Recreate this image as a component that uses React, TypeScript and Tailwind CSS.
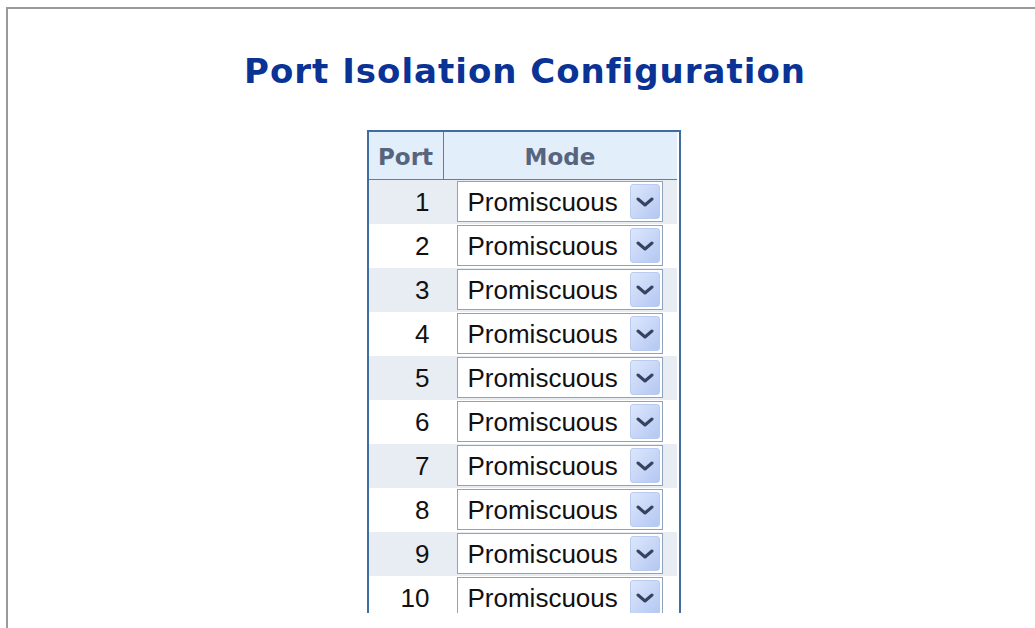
const ports = Array.from({ length: 10 }, (_, i) => i + 1);

const Chevron = () => (
    <svg width="18" height="10" viewBox="0 0 18 10" fill="none">
        <path d="M2 2 L9 8 L16 2" stroke="#36425e" strokeWidth="3" strokeLinecap="round" strokeLinejoin="round" />
    </svg>
);

const ModeSelect = () => (
    <div className="mt-px flex h-[41px] w-[206px] items-center border border-[#8ea3bf] bg-white pl-[10px] pr-[2px]">
        <span className="flex-1 text-[26px] leading-none text-[#111]">Promiscuous</span>
        <span className="flex h-[35px] w-[30px] items-center justify-center rounded-[3px] border border-[#b9cbef] bg-gradient-to-br from-[#dde7fc] to-[#b3c7f3]">
            <Chevron />
        </span>
    </div>
);

export default function App() {
    return (
        <div className="h-[628px] w-[1035px] overflow-hidden bg-white">
            <div className="ml-[6px] mt-[7px] h-[700px] w-[1038px] border-2 border-[#9a9a9a] bg-white">
                <h1
                    className="mt-[45px] text-center text-[34px] font-bold leading-none tracking-[1px] text-[#0a3396]"
                    style={{ fontFamily: '"DejaVu Sans", Verdana, sans-serif' }}>
                    Port Isolation Configuration
                </h1>

                <div className="mt-[42px] flex h-[483px] justify-center overflow-hidden pr-[3px]">
                    <div className="h-[520px] w-[314px] border-x-2 border-t-2 border-[#3f6d9f] pr-[2px]">
                        <div
                            className="grid h-[48px] grid-cols-[75px_1fr] border-b border-[#5c7fa6] bg-[#e3eefb] text-[23px] font-bold text-[#56647d]"
                            style={{ fontFamily: '"DejaVu Sans", Verdana, sans-serif' }}>
                            <div className="flex items-center justify-center border-r border-[#5c7fa6] pt-[3px]">Port</div>
                            <div className="flex items-center justify-center pt-[3px]">Mode</div>
                        </div>

                        {ports.map((port) => (
                            <div
                                key={port}
                                className={`grid h-[44px] grid-cols-[75px_1fr] items-start ${port % 2 === 1 ? 'bg-[#e8edf3]' : 'bg-white'}`}
                                style={{ fontFamily: '"Liberation Sans", Arial, sans-serif' }}>
                                <div className="flex h-[43px] items-center justify-end pr-[14px] text-[26px] leading-none text-[#111]">
                                    {port}
                                </div>
                                <div className="pl-[13px]">
                                    <ModeSelect />
                                </div>
                            </div>
                        ))}
                    </div>
                </div>
            </div>
        </div>
    );
}
